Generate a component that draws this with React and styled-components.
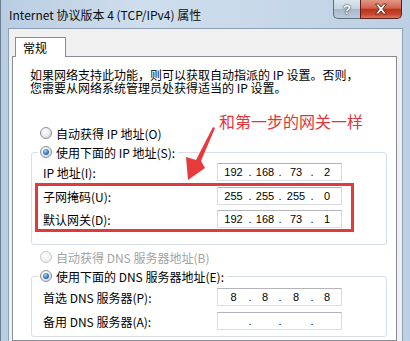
import React from 'react';
import styled, { createGlobalStyle } from 'styled-components';

const Global = createGlobalStyle`
  html, body { margin: 0; padding: 0; background: #c6d7e9; }
  body { font-family: "Noto Sans CJK SC", "Noto Sans", sans-serif; }
`;

const Window = styled.div`
  position: relative;
  width: 410px;
  height: 341px;
  overflow: hidden;
  box-sizing: border-box;
  display: flex;
  flex-direction: column;
  border-left: 1px solid #6b7d91;
  background: linear-gradient(90deg, #b9cde2 0%, #cfdeed 35%, #c8d8ea 65%, #bccfe3 100%);
`;

const TitleBar = styled.div`
  height: 28px;
  flex: none;
  display: flex;
  align-items: flex-start;
`;

const Title = styled.div`
  padding: 7px 0 0 8px;
  font-size: 12px;
  line-height: 16px;
  color: #0b0b0b;
  white-space: nowrap;
`;

const CaptionButtons = styled.div`
  margin-left: auto;
  margin-right: 8px;
  display: flex;
`;

const HelpButton = styled.div`
  width: 27px;
  height: 19px;
  box-sizing: border-box;
  border: 1px solid #5f6f82;
  border-top: none;
  border-right: none;
  border-radius: 0 0 0 5px;
  background: linear-gradient(180deg, #dde6ef 0%, #c6d2de 48%, #a9b8c8 52%, #bccbdb 100%);
  display: flex;
  align-items: center;
  justify-content: center;
  color: #fff;
  font-family: "Liberation Sans", sans-serif;
  font-weight: bold;
  font-size: 13px;
  text-shadow: 0 0 2px #2a3747, 0 0 1px #2a3747;
`;

const CloseButton = styled.div`
  width: 42px;
  height: 19px;
  box-sizing: border-box;
  border: 1px solid #5a2019;
  border-top: none;
  border-radius: 0 0 5px 0;
  background: linear-gradient(180deg, #e39786 0%, #d2644d 45%, #bd321b 52%, #c84630 80%, #d87a63 100%);
  display: flex;
  align-items: center;
  justify-content: center;
`;

const Client = styled.div`
  flex: 1;
  margin: 0 7px 0 7px;
  background: #f0f0f0;
  border-top: 1px solid #8d9fb3;
  border-left: 1px solid #8d9fb3;
  border-right: 1px solid #8d9fb3;
  padding: 8px 5px 0 3px;
  display: flex;
  flex-direction: column;
  min-height: 0;
`;

const TabStrip = styled.div`
  display: flex;
  padding-left: 3px;
`;

const Tab = styled.div`
  width: 51px;
  height: 20px;
  box-sizing: border-box;
  background: #fff;
  border: 1px solid #898c95;
  border-bottom: none;
  margin-bottom: -1px;
  position: relative;
  z-index: 1;
  padding-left: 7px;
  font-size: 12px;
  line-height: 19px;
  color: #000;
`;

const Panel = styled.div`
  flex: 1;
  background: #fff;
  border: 1px solid #898c95;
  padding: 11px 0 0 17px;
  font-size: 12px;
  color: #000;
`;

const Intro = styled.div`
  display: flex;
  flex-direction: column;
`;

const IntroLine = styled.div`
  height: 13px;
  line-height: 13px;
  font-size: 12px;
  white-space: nowrap;
`;

const RadioRow = styled.div`
  display: flex;
  align-items: center;
  gap: 4px;
  height: 18px;
  padding-left: 10px;
  margin-top: ${p => p.$top}px;
  color: ${p => (p.$disabled ? '#a3a3a3' : '#000')};
  white-space: nowrap;
`;

const RadioCircle = styled.span`
  width: 12px;
  height: 12px;
  box-sizing: border-box;
  border-radius: 50%;
  border: 1px solid ${p => (p.$disabled ? '#c6c8cc' : '#8b9096')};
  background: ${p =>
    p.$disabled
      ? 'radial-gradient(circle at 40% 35%, #ffffff 0%, #f1f1f1 60%, #e4e4e4 100%)'
      : 'radial-gradient(circle at 40% 35%, #ffffff 0%, #e6e8ea 55%, #c9ccd0 100%)'};
  display: flex;
  align-items: center;
  justify-content: center;
  flex: none;
  &::after {
    content: '';
    display: ${p => (p.$checked ? 'block' : 'none')};
    width: 6px;
    height: 6px;
    border-radius: 50%;
    background: radial-gradient(circle at 40% 35%, #a9dcfb 0%, #3a86cc 45%, #14457d 100%);
  }
`;

const Group = styled.fieldset`
  margin: ${p => p.$top}px 0 0 1px;
  width: 356px;
  box-sizing: border-box;
  border: 1px solid #d5dfe5;
  border-radius: 3px;
  padding: ${p => p.$padTop}px 44px ${p => p.$padBottom}px 11px;
  min-width: 0;
`;

const Legend = styled.legend`
  margin-left: -5px;
  padding: 0 3px 0 2px;
  height: 18px;
  display: flex;
  align-items: center;
  gap: 4px;
  white-space: nowrap;
`;

const Rows = styled.div`
  display: flex;
  flex-direction: column;
  gap: ${p => p.$gap}px;
`;

const Row = styled.div`
  display: flex;
  align-items: center;
  justify-content: space-between;
  height: 18px;
  white-space: nowrap;
`;

const Highlight = styled.div`
  margin: 2px -12px 0 -8px;
  padding: 1px 9px 1px 5px;
  border: 3px solid #e2393c;
  display: flex;
  flex-direction: column;
  gap: 5px;
`;

const IpBox = styled.div`
  width: 125px;
  height: 18px;
  box-sizing: border-box;
  border: 1px solid #dadce1;
  border-top-color: #b2b5bc;
  background: #fff;
  display: grid;
  grid-template-columns: 31px 2px 28px 2px 30px 2px 28px;
  align-items: center;
  font-family: "Liberation Sans", "DejaVu Sans", sans-serif;
  font-size: 11px;
  line-height: 16px;
  color: #000;
`;

const Octet = styled.span`
  text-align: center;
`;

const Dot = styled.span`
  display: flex;
  justify-content: center;
  overflow: visible;
`;

const Note = styled.div`
  position: absolute;
  left: 218px;
  top: 111px;
  font-size: 16px;
  line-height: 20px;
  color: #e3353a;
  white-space: nowrap;
`;

const Arrow = styled.svg`
  position: absolute;
  left: 180px;
  top: 124px;
`;

function Radio({ checked, disabled }) {
  return <RadioCircle $checked={checked} $disabled={disabled} />;
}

function IpField({ value }) {
  const parts = value ? value.split('.') : ['', '', '', ''];
  const out = [];
  parts.forEach((p, i) => {
    if (i > 0) out.push(<Dot key={'d' + i}>.</Dot>);
    out.push(<Octet key={'o' + i}>{p}</Octet>);
  });
  return <IpBox>{out}</IpBox>;
}

export default function App() {
  return (
    <>
      <Global />
      <Window>
        <TitleBar>
          <Title>Internet 协议版本 4 (TCP/IPv4) 属性</Title>
          <CaptionButtons>
            <HelpButton>?</HelpButton>
            <CloseButton>
              <svg width="16" height="12" viewBox="0 0 16 12">
                <path
                  d="M2.5 1 L5.5 1 L8 4 L10.5 1 L13.5 1 L9.7 6 L13.5 11 L10.5 11 L8 8 L5.5 11 L2.5 11 L6.3 6 Z"
                  fill="#fff"
                  stroke="#5b2318"
                  strokeWidth="0.9"
                  strokeLinejoin="round"
                />
              </svg>
            </CloseButton>
          </CaptionButtons>
        </TitleBar>
        <Client>
          <TabStrip>
            <Tab>常规</Tab>
          </TabStrip>
          <Panel>
            <Intro>
              <IntroLine>如果网络支持此功能，则可以获取自动指派的 IP 设置。否则，</IntroLine>
              <IntroLine>您需要从网络系统管理员处获得适当的 IP 设置。</IntroLine>
            </Intro>
            <RadioRow $top={30}>
              <Radio />
              自动获得 IP 地址(O)
            </RadioRow>
            <Group $top={1} $padTop={2} $padBottom={12}>
              <Legend>
                <Radio checked />
                使用下面的 IP 地址(S):
              </Legend>
              <Rows $gap={0}>
                <Row>
                  <span>IP 地址(I):</span>
                  <IpField value="192.168.73.2" />
                </Row>
                <Highlight>
                  <Row>
                    <span>子网掩码(U):</span>
                    <IpField value="255.255.255.0" />
                  </Row>
                  <Row>
                    <span>默认网关(D):</span>
                    <IpField value="192.168.73.1" />
                  </Row>
                </Highlight>
              </Rows>
            </Group>
            <RadioRow $top={3} $disabled>
              <Radio disabled />
              自动获得 DNS 服务器地址(B)
            </RadioRow>
            <Group $top={1} $padTop={3} $padBottom={6}>
              <Legend>
                <Radio checked />
                使用下面的 DNS 服务器地址(E):
              </Legend>
              <Rows $gap={6}>
                <Row>
                  <span>首选 DNS 服务器(P):</span>
                  <IpField value="8.8.8.8" />
                </Row>
                <Row>
                  <span>备用 DNS 服务器(A):</span>
                  <IpField />
                </Row>
              </Rows>
            </Group>
          </Panel>
        </Client>
        <Note>和第一步的网关一样</Note>
        <Arrow width="40" height="60" viewBox="0 0 40 60">
          <polygon points="32,3 34,4 20,37 24,44 7,56 5,33 15,36" fill="#e63a3c" />
        </Arrow>
      </Window>
    </>
  );
}
